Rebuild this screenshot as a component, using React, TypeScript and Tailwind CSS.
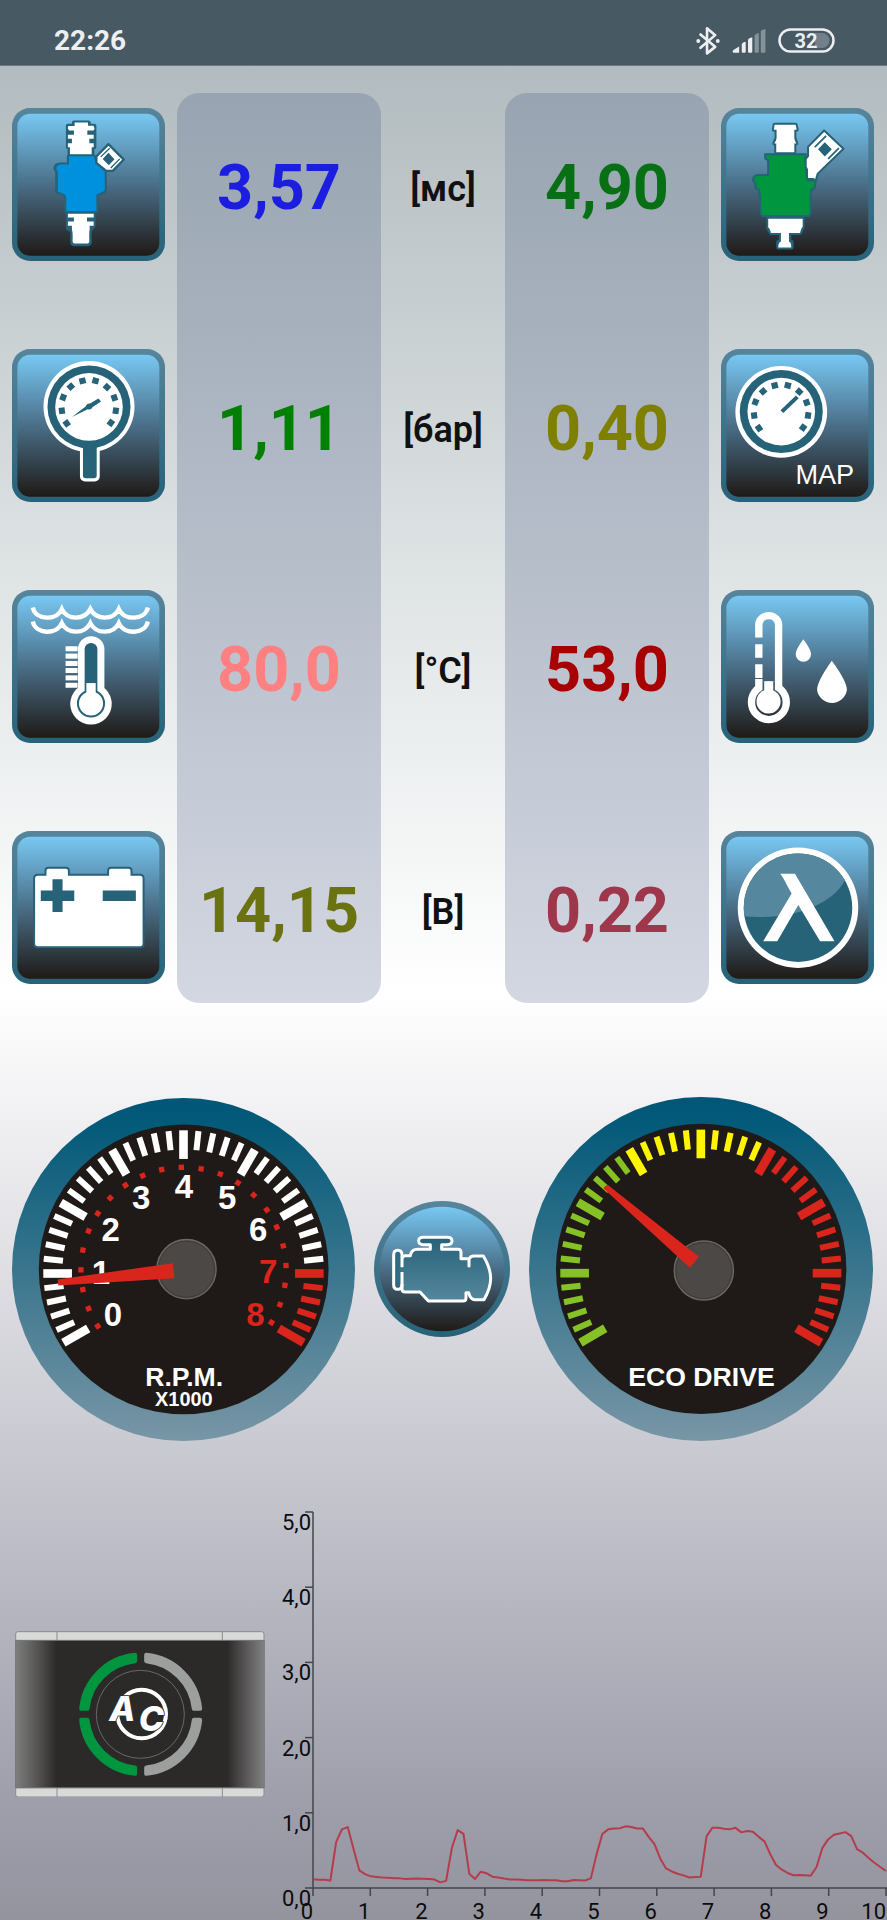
import type { ReactNode } from "react";

const TEAL = "#266278";
const RED = "#da251c";

/* ---------- status bar ---------- */

function StatusBar() {
  return (
    <header className="flex h-[66px] items-center justify-between border-b border-[#697a84] bg-[#475963] pt-4 pr-[52px] pl-[54px]">
      <time className="text-[28px] leading-8 font-bold text-[#eceeef]">22:26</time>
      <div className="flex items-center gap-3">
        <svg viewBox="650 78 72 86" className="h-7 w-6" role="img" aria-label="Bluetooth">
          <path
            d="M663 101L708 139L683 159V82L708 103L663 142"
            fill="none"
            stroke="#eceeef"
            strokeWidth="8"
            strokeLinejoin="round"
            strokeLinecap="round"
          />
          <circle cx="656" cy="121" r="6" fill="#eceeef" />
          <circle cx="716" cy="121" r="6" fill="#eceeef" />
        </svg>
        <svg viewBox="756 84 102 73" className="h-6 w-[34px]" role="img" aria-label="Signal">
          <path d="M757 151Q757 149 777 137V156H760Q757 156 757 151Z" fill="#eceeef" />
          <path d="M785 130Q790 123 797 123V153Q797 156 794 156H788Q785 156 785 153Z" fill="#eceeef" />
          <path d="M804 116Q809 110 817 109V153Q817 156 814 156H807Q804 156 804 153Z" fill="#eceeef" />
          <path d="M824 103Q829 97 837 96V153Q837 156 834 156H827Q824 156 824 153Z" fill="#84929a" />
          <path d="M843 90Q849 85 857 84V153Q857 156 854 156H846Q843 156 843 153Z" fill="#84929a" />
        </svg>
        <svg viewBox="0 0 57 25" className="h-[25px] w-[57px]" role="img" aria-label="Battery 32%">
          <rect x="1.5" y="1.5" width="54" height="22" rx="11" fill="none" stroke="#eceeef" strokeWidth="2.5" />
          <path d="M37 5H44A7.5 7.5 0 0 1 44 20H37Z" fill="#71808a" />
          <text x="28" y="20" textAnchor="middle" fontSize="20" fontWeight="700" fill="#eceeef">
            32
          </text>
        </svg>
      </div>
    </header>
  );
}

/* ---------- sensor tiles ---------- */

function Tile({ label, x, y, children }: { label: string; x: number; y: number; children: ReactNode }) {
  return (
    <svg viewBox={`${x} ${y} 457 457`} className="block h-[153px] w-full" role="img" aria-label={label}>
      <rect x={x} y={y} width="457" height="457" rx="54" fill="url(#tileFrame)" />
      <rect x={x + 16} y={y + 17} width="424" height="424" rx="38" fill="url(#tileFace)" />
      {children}
    </svg>
  );
}

function PetrolInjector() {
  return (
    <Tile label="Petrol injector" x={35} y={324}>
      <g stroke={TEAL} strokeWidth="12" strokeLinejoin="round" fill={TEAL}>
        <path d="M220 367H264V377H281V441H275V462H207V441H202V377H220Z" />
        <path d="M202 638H279V676L267 690V724Q267 731 260 731H222Q215 731 215 724V690L202 684Z" />
        <path d="M205 468H279L286 488L312 514V570Q310 578 287 582V632H197V582L170 574V515L165 505Q165 493 180 493H205Z" />
      </g>
      <path
        fill="#fff"
        d="M222 367H262V377H279V380Q284 384 279 391H260V404H279V416H266V429H279V441H273V462H208V441H202V429H214V416H202V404H220V391H205Q199 384 203 378H222Z"
      />
      <path
        fill="#0091de"
        d="M205 468H279L286 488L312 514V570Q310 574 287 582V632H197V588Q197 582 172 574V515L167 505Q167 495 180 493H205Z"
      />
      <path
        fill="#fff"
        d="M202 640H279V651H259V663H279V676H267V688Q265 692 266 722Q266 729 258 729H224Q216 729 216 722Q217 695 214 688V676H202V663H220V651H202Z"
      />
      <path d="M323 432L369 478L336 512H316L287 488V469Z" fill="#fff" stroke={TEAL} strokeWidth="7" strokeLinejoin="round" />
      <path d="M323 458L341 477L324 495L306 476Z" fill={TEAL} />
      <path d="M300 470L327 444M330 503L357 476" stroke={TEAL} strokeWidth="4" />
    </Tile>
  );
}

function GasInjector() {
  return (
    <Tile label="Gas injector" x={721} y={324}>
      <g stroke={TEAL} strokeWidth="12" strokeLinejoin="round">
        <path d="M881 374H944L947 389H940V414L946 430H940V456H886V430H880L887 414V389H879Z" />
        <path d="M862 655H965V680L957 697H925V724H932V741H892V724H900V697H870L862 682Z" />
      </g>
      <g fill="#fff">
        <path d="M881 374H944L947 389H940V414Q942 424 946 430H940V456H886V430H880Q885 424 887 414V389H879Z" />
        <path d="M862 655H965V679Q962 680 957 697H924V723Q931 725 931 741H892Q892 726 900 723V697H870Q867 683 862 681Z" />
      </g>
      <path
        d="M853 462H974V500L980 540H1004L1000 565Q988 567 989 578V635Q989 642 983 647H843Q838 642 838 600L835 568L824 564V550L816 540Q818 524 832 524H862V481L853 474Z"
        fill="#009640"
        stroke={TEAL}
        strokeWidth="6"
      />
      <path
        d="M1029 391L1087 446L1010 520L1004 541L996 536H978V508L974 500V476L981 468V440Z"
        fill="#fff"
        stroke={TEAL}
        strokeWidth="6"
        strokeLinejoin="round"
      />
      <path d="M1031 426L1052 447L1031 469L1011 447Z" fill={TEAL} />
      <path d="M1001 441L1035 407M1041 476L1073 444" stroke={TEAL} strokeWidth="5" />
    </Tile>
  );
}

const dialMarks = [
  [-67, 49],
  [-81, 11],
  [-77, -29],
  [-54, -61],
  [-19, -78],
  [20, -78],
  [54, -59],
  [76, -27],
  [80, 12],
  [65, 48],
];

function DialFace({ cx, cy }: { cx: number; cy: number }) {
  return (
    <g transform={`translate(${cx} ${cy})`}>
      <circle r="124" fill={TEAL} />
      <circle r="101" fill="#fff" />
      {dialMarks.map(([x, y]) => (
        <rect
          key={x}
          x="-9"
          y="-10"
          width="18"
          height="19"
          fill={TEAL}
          transform={`translate(${x} ${y}) rotate(${(Math.atan2(y, x) * 180) / Math.PI})`}
        />
      ))}
    </g>
  );
}

function GasPressure() {
  return (
    <Tile label="Gas pressure" x={35} y={56}>
      <circle cx="265" cy="228" r="136" fill="#fff" />
      <rect x="238" y="330" width="59" height="122" rx="15" fill="#fff" />
      <rect x="247" y="330" width="41" height="112" rx="8" fill={TEAL} />
      <DialFace cx={265} cy={229} />
      <path d="M214 259L255 228Q258 218 268 219L293 204L301 213L276 229Q271 239 261 236Z" fill={TEAL} />
    </Tile>
  );
}

function MapPressure() {
  return (
    <Tile label="Manifold pressure" x={721} y={56}>
      <circle cx="901" cy="244" r="137" fill="#fff" />
      <DialFace cx={901} cy={243} />
      <path d="M903 243L949 199" stroke={TEAL} strokeWidth="12" />
      <text x="1031" y="460" textAnchor="middle" fontSize="81" fill="#fff" className="font-['Liberation_Sans',Arial,sans-serif]">
        MAP
      </text>
    </Tile>
  );
}

const wave =
  "M97 112C106 151 168 153 184 117C200 151 252 151 269 117C286 151 338 151 354 117C370 153 432 151 441 112";

function CoolantTemp() {
  return (
    <Tile label="Coolant temperature" x={35} y={60}>
      <g fill="none" stroke="#fff" strokeWidth="13">
        <path d={wave} />
        <path d={wave} transform="translate(0 42)" />
      </g>
      <g fill="#fff">
        {[228, 250, 272, 293, 315, 337].map((y) => (
          <rect key={y} x="195" y={y} width="36" height="15" />
        ))}
        <rect x="232" y="198" width="79" height="190" rx="39" />
        <circle cx="271" cy="400" r="62" />
      </g>
      <path d="M252 340V237A19 19 0 0 1 290 237V362H252Z" fill={TEAL} />
      <circle cx="271" cy="399" r="42" fill={TEAL} />
      <path d="M257 338H285V370H257Z" fill="#fff" />
      <circle cx="271" cy="399" r="36" fill="#fff" />
    </Tile>
  );
}

function GasTemp() {
  return (
    <Tile label="Gas temperature" x={721} y={60}>
      <path d="M893 350V161A30 30 0 0 0 834 161V202" fill="none" stroke="#fff" strokeWidth="22" />
      <path d="M823 222H845V262H823ZM823 282H845V323H823ZM823 326H845V355H823Z" fill="#fff" />
      <circle cx="864" cy="395" r="52" fill="none" stroke="#fff" strokeWidth="22" />
      <path d="M845 334H882V366H845Z" fill="#40596a" />
      <path d="M850 333H877V372H850Z" fill="#fff" />
      <circle cx="863" cy="393" r="36" fill="#fff" />
      <path d="M967 207Q990 238 990 251A23 23 0 0 1 944 251Q944 238 967 207Z" fill="#fff" />
      <path d="M1052 271Q1098 334 1097 359A45 45 0 0 1 1008 359Q1007 334 1052 271Z" fill="#fff" />
    </Tile>
  );
}

function Battery() {
  return (
    <Tile label="Battery voltage" x={35} y={784}>
      <path
        d="M101 926Q101 915 112 915H135V903Q135 894 144 894H196Q205 894 205 903V915H322V903Q322 894 331 894H383Q392 894 392 903V915H418Q428 915 428 926V1120Q428 1131 418 1131H112Q101 1131 101 1120Z"
        fill="#fff"
        stroke={TEAL}
        strokeWidth="6"
      />
      <path d="M156 928H186V962H221V993H186V1026H156V993H121V962H156Z" fill={TEAL} />
      <path d="M306 962H405V993H306Z" fill={TEAL} />
    </Tile>
  );
}

function Lambda() {
  return (
    <Tile label="Lambda probe" x={721} y={784}>
      <clipPath id="lambdaDisc">
        <circle cx="951" cy="1013" r="162" />
      </clipPath>
      <circle cx="951" cy="1013" r="180" fill="#fff" />
      <circle cx="951" cy="1013" r="162" fill={TEAL} />
      <path d="M780 1038C950 1056 1066 990 1092 928V820H780Z" fill="#55879e" clipPath="url(#lambdaDisc)" />
      <path d="M898 912H942L1060 1113H1017L952 1005L889 1113H847L932 971Q918 946 912 934Q908 926 898 912Z" fill="#fff" />
    </Tile>
  );
}

/* ---------- readings ---------- */

function Readings({ values }: { values: { text: string; tone: string }[] }) {
  return (
    <div className="-mt-[15px] -mb-[19px] grid auto-rows-[153px] gap-[88px] rounded-[22px] bg-linear-to-b from-[#98a4b1] to-[#d3d7e2] pt-[18px] pb-[15px] text-center">
      {values.map((v) => (
        <output key={v.text} className={`flex items-center justify-center text-[63px] leading-none font-bold ${v.tone}`}>
          {v.text}
        </output>
      ))}
    </div>
  );
}

const leftValues = [
  { text: "3,57", tone: "text-[#1b1de0]" },
  { text: "1,11", tone: "text-[#008000]" },
  { text: "80,0", tone: "text-[#ff8080]" },
  { text: "14,15", tone: "text-[#6b7210]" },
];
const rightValues = [
  { text: "4,90", tone: "text-[#077014]" },
  { text: "0,40", tone: "text-[#808000]" },
  { text: "53,0", tone: "text-[#a80000]" },
  { text: "0,22", tone: "text-[#9e374b]" },
];

function Sensors() {
  return (
    <section className="grid grid-cols-[153fr_204fr_100fr_204fr_153fr] gap-x-3 pt-[42px] pr-[13px] pl-3">
      <div className="grid auto-rows-[153px] gap-[88px]">
        <PetrolInjector />
        <GasPressure />
        <CoolantTemp />
        <Battery />
      </div>
      <Readings values={leftValues} />
      <div className="-mb-1 grid auto-rows-[153px] gap-[88px] pt-1 text-center">
        {["[мс]", "[бар]", "[°C]", "[В]"].map((unit) => (
          <span key={unit} className="flex items-center justify-center text-[36px] leading-none font-semibold text-[#111]">
            {unit}
          </span>
        ))}
      </div>
      <Readings values={rightValues} />
      <div className="grid auto-rows-[153px] gap-[88px]">
        <GasInjector />
        <MapPressure />
        <GasTemp />
        <Lambda />
      </div>
    </section>
  );
}

/* ---------- gauges ---------- */

function Ticks({ cx, cy, r, color }: { cx: number; cy: number; r: number; color: (i: number) => string }) {
  return (
    <g>
      {Array.from({ length: 41 }, (_, i) => {
        const a = ((210 - i * 6) * Math.PI) / 180;
        const major = i % 5 === 0;
        const outer = r + 9 * Math.sin(a);
        const inner = outer - (major ? 86 : 58);
        return (
          <line
            key={i}
            x1={cx + outer * Math.cos(a)}
            y1={cy - outer * Math.sin(a)}
            x2={cx + inner * Math.cos(a)}
            y2={cy - inner * Math.sin(a)}
            stroke={color(i)}
            strokeWidth={major ? 26 : 18}
          />
        );
      })}
    </g>
  );
}

const rpmDigits: [number, number][] = [
  [338, 738],
  [302, 611],
  [331, 482],
  [423, 385],
  [551, 352],
  [681, 385],
  [774, 482],
  [804, 610],
  [766, 738],
];

function RpmGauge() {
  return (
    <svg viewBox="35 53 1030 1030" className="block min-w-0 flex-[343]" role="img" aria-label="Engine speed">
      <circle cx="550" cy="568" r="515" fill="url(#gaugeRing)" />
      <circle cx="550.5" cy="567.5" r="435" fill="#1f1a17" />
      <Ticks cx={550} cy={580} r={421} color={(i) => (i >= 35 ? RED : "#fff")} />
      {Array.from({ length: 23 }, (_, i) => {
        const deg = 213.3 - i * 11.1;
        const a = (deg * Math.PI) / 180;
        return (
          <rect
            key={i}
            x="-8"
            y="-8"
            width="16"
            height="16"
            fill={RED}
            transform={`translate(${550 + 308 * Math.cos(a)} ${569 - 308 * Math.sin(a)}) rotate(${-deg})`}
          />
        );
      })}
      <g textAnchor="middle" fontWeight="700" fill="#fff" className="font-['Liberation_Sans',Arial,sans-serif]">
        {rpmDigits.map(([x, y], n) => (
          <text key={n} x={x} y={y} fontSize="99" fill={n >= 7 ? RED : "#fff"}>
            {n}
          </text>
        ))}
        <text x="552" y="918" fontSize="80">
          R.P.M.
        </text>
        <text x="551" y="978" fontSize="60">
          X1000
        </text>
      </g>
      <circle cx="559" cy="567" r="89" fill="#4c4846" stroke="#6b6867" strokeWidth="4" />
      <circle cx="559" cy="567" r="84" fill="none" stroke="#393534" strokeWidth="2" />
      <path d="M172 598L518 549L523 594L174 616Z" fill={RED} />
    </svg>
  );
}

function EcoGauge() {
  return (
    <svg viewBox="36 50 1033 1033" className="block min-w-0 flex-[344]" role="img" aria-label="Eco drive">
      <circle cx="552.5" cy="566.5" r="516.5" fill="url(#gaugeRing)" />
      <circle cx="553" cy="566" r="436" fill="#1f1a17" />
      <Ticks cx={552} cy={579} r={422} color={(i) => (i < 15 ? "#86c226" : i < 25 ? "#fff500" : RED)} />
      <text
        x="554"
        y="919"
        textAnchor="middle"
        fontSize="80"
        fontWeight="700"
        fill="#fff"
        className="font-['Liberation_Sans',Arial,sans-serif]"
      >
        ECO DRIVE
      </text>
      <circle cx="561" cy="571" r="89" fill="#4c4846" stroke="#6b6867" strokeWidth="4" />
      <circle cx="561" cy="571" r="84" fill="none" stroke="#393534" strokeWidth="2" />
      <path d="M259 324L271 313L546 530L519 563Z" fill={RED} />
    </svg>
  );
}

function EngineButton() {
  return (
    <button type="button" aria-label="Engine diagnostics" className="min-w-0 flex-[136] rounded-full">
      <svg viewBox="42 63 408 408" className="block w-full">
        <circle cx="246" cy="267" r="204" fill="url(#tileFrame)" />
        <circle cx="246" cy="267" r="187" fill="url(#tileFace)" />
        <path
          d="M126 263V225Q126 211 113 211Q101 211 101 225V315Q101 328 113 328Q126 328 126 315V275Z"
          fill="#2f6b82"
        />
        <path
          d="M126 263V238Q126 228 136 228H150Q154 208 172 208H211V193H190Q176 193 176 182Q176 172 190 172H262Q276 172 276 183Q276 193 262 193H245V208H294Q303 208 303 217V236H327V240Q329 228 342 228H370Q392 265 392 295Q392 325 372 359H345Q331 359 328 340H316V354Q316 363 307 363H205L180 336H136Q126 336 126 328V275H118V263Z"
          fill="url(#engineFill)"
        />
        <g fill="none" stroke="#fff" strokeWidth="9" strokeLinejoin="round">
          <path d="M126 262V225Q126 211 113 211Q101 211 101 225V315Q101 328 113 328Q126 328 126 315V276" />
          <path d="M126 235Q128 227 136 227H151Q154 208 172 208H211V194H190Q176 194 176 183Q176 172 190 172H262Q276 172 276 183Q276 194 262 194H245V208H294Q303 208 303 217V236H327V258V240Q329 228 342 228H370Q392 265 392 295Q392 325 372 359H345Q331 359 326 338H318V354Q318 363 309 363H205L180 336H136Q126 336 126 328V312" />
        </g>
      </svg>
    </button>
  );
}

/* ---------- gas controller unit ---------- */

function ControllerUnit() {
  const arc = "M-17 -178A179 179 0 0 0 -178 -17L-160 -17A161 161 0 0 1 -17 -160Z";
  return (
    <button type="button" aria-label="Gas system switch" className="block w-full">
      <svg viewBox="45 93 750 500" className="block w-full">
        <linearGradient id="unitBody">
          <stop offset="0" stopColor="#7e7e7e" />
          <stop offset="0.09" stopColor="#555453" />
          <stop offset="0.165" stopColor="#2b2a29" />
          <stop offset="0.85" stopColor="#2b2a29" />
          <stop offset="0.92" stopColor="#555354" />
          <stop offset="1" stopColor="#828182" />
        </linearGradient>
        <g fill="#d8dad9" stroke="#8b8b90" strokeWidth="3">
          <path d="M47 121V102Q47 95 54 95H785Q792 95 792 102V121Z" />
          <path d="M47 564V584Q47 591 54 591H785Q792 591 792 584V564Z" />
          <path d="M171 95V121M667 95V121M171 564V591M667 564V591" />
        </g>
        <rect x="46" y="122" width="747" height="441" fill="url(#unitBody)" stroke="#6f6f72" strokeWidth="2" />
        <g strokeWidth="13" strokeLinejoin="round">
          <g fill="#009640" stroke="#009640">
            <path d={arc} transform="translate(422 343)" />
            <path d={arc} transform="translate(422 343) scale(1 -1)" />
          </g>
          <g fill="#9d9f9e" stroke="#9d9f9e">
            <path d={arc} transform="translate(422 343) scale(-1 1)" />
            <path d={arc} transform="translate(422 343) scale(-1 -1)" />
          </g>
        </g>
        <circle cx="421" cy="343" r="132" fill="none" stroke="#696867" strokeWidth="3" />
        <circle cx="425" cy="342" r="73" fill="none" stroke="#fff" strokeWidth="12" />
        <g
          fontSize="102"
          fontWeight="800"
          fontStyle="italic"
          fill="#fff"
          stroke="#2b2a29"
          strokeWidth="5"
          className="font-[Inter,Roboto,sans-serif] [paint-order:stroke]"
        >
          <text x="328" y="362">
            A
          </text>
          <text x="416" y="394">
            C
          </text>
        </g>
      </svg>
    </button>
  );
}

/* ---------- lambda voltage chart ---------- */

const samples = [
  0.115, 0.11, 0.11, 0.1, 0.61, 0.78, 0.81, 0.52, 0.235, 0.185, 0.155, 0.147, 0.14, 0.135, 0.13, 0.128, 0.12, 0.122,
  0.125, 0.122, 0.12, 0.112, 0.075, 0.095, 0.535, 0.77, 0.72, 0.19, 0.12, 0.217, 0.195, 0.15, 0.14, 0.125, 0.112, 0.114,
  0.11, 0.103, 0.102, 0.102, 0.105, 0.103, 0.104, 0.09, 0.09, 0.105, 0.103, 0.1, 0.128, 0.45, 0.72, 0.78, 0.79, 0.795,
  0.82, 0.81, 0.79, 0.79, 0.68, 0.585, 0.39, 0.26, 0.22, 0.19, 0.168, 0.14, 0.146, 0.15, 0.69, 0.8, 0.8, 0.788, 0.78, 0.8,
  0.74, 0.757, 0.748, 0.68, 0.62, 0.45, 0.305, 0.243, 0.2, 0.17, 0.173, 0.17, 0.164, 0.28, 0.53, 0.646, 0.708, 0.726,
  0.743, 0.69, 0.518, 0.47, 0.4, 0.336, 0.28, 0.226,
];

function VoltageChart() {
  const x0 = 43;
  const y0 = 388;
  const stepX = 57.3;
  const stepY = 75.2;
  const points = samples.map((v, i) => `${x0 + (i * stepX * 10) / 99},${y0 - v * stepY}`).join(" ");
  return (
    <svg viewBox="0 0 617 420" className="block w-full" role="img" aria-label="Lambda voltage over time">
      <g stroke="#45454b" strokeWidth="1.5">
        <path d={`M${x0} 12V396M${x0 - 8} ${y0}H617`} />
        {[1, 2, 3, 4, 5].map((n) => (
          <path key={n} d={`M${x0 - 8} ${y0 - n * stepY}H${x0}`} />
        ))}
        {[1, 2, 3, 4, 5, 6, 7, 8, 9, 10].map((n) => (
          <path key={n} d={`M${x0 + n * stepX} ${y0}V396`} />
        ))}
      </g>
      <g fontSize="22" fill="#0c0c0e" textAnchor="end">
        {["0,0", "1,0", "2,0", "3,0", "4,0", "5,0"].map((t, n) => (
          <text key={t} x={x0 - 2} y={y0 + 18 - n * stepY}>
            {t}
          </text>
        ))}
        {[0, 1, 2, 3, 4, 5, 6, 7, 8, 9, 10].map((n) => (
          <text key={n} x={x0 + n * stepX} y="419">
            {n}
          </text>
        ))}
      </g>
      <polyline points={points} fill="none" stroke="#b53d4b" strokeWidth="2" strokeLinejoin="round" />
    </svg>
  );
}

/* ---------- page ---------- */

function SharedGradients() {
  return (
    <svg className="absolute size-0" aria-hidden="true">
      <linearGradient id="tileFrame" x2="0" y2="1">
        <stop offset="0" stopColor="#56859c" />
        <stop offset="1" stopColor="#266278" />
      </linearGradient>
      <linearGradient id="tileFace" x2="0" y2="1">
        <stop offset="0" stopColor="#78c8f3" />
        <stop offset="0.5" stopColor="#4a6e87" />
        <stop offset="1" stopColor="#1f1a17" />
      </linearGradient>
      <linearGradient id="gaugeRing" x2="0" y2="1">
        <stop offset="0" stopColor="#005677" />
        <stop offset="0.08" stopColor="#045a79" />
        <stop offset="1" stopColor="#7896a6" />
      </linearGradient>
      <linearGradient id="engineFill" x2="0" y2="1">
        <stop offset="0" stopColor="#266278" />
        <stop offset="1" stopColor="#55879e" />
      </linearGradient>
    </svg>
  );
}

export default function App() {
  return (
    <div className="flex min-h-screen flex-col font-[Roboto,'Noto_Sans',sans-serif]">
      <SharedGradients />
      <StatusBar />
      <main className="flex grow flex-col bg-linear-[180deg,#b2bbbf_0%,#dee3e4_27%,#ffffff_50%,#c6c6cf_76%,#9d9eaa_94%,#94949f_100%]">
        <Sensors />
        <section className="flex items-center gap-[19px] pt-[113px] pr-3.5 pl-3">
          <RpmGauge />
          <EngineButton />
          <EcoGauge />
        </section>
        <section className="grid grid-cols-[minmax(0,270fr)_minmax(0,617fr)] items-center pt-[59px]">
          <div className="pt-2 pr-[5px] pl-[15px]">
            <ControllerUnit />
          </div>
          <VoltageChart />
        </section>
      </main>
    </div>
  );
}
